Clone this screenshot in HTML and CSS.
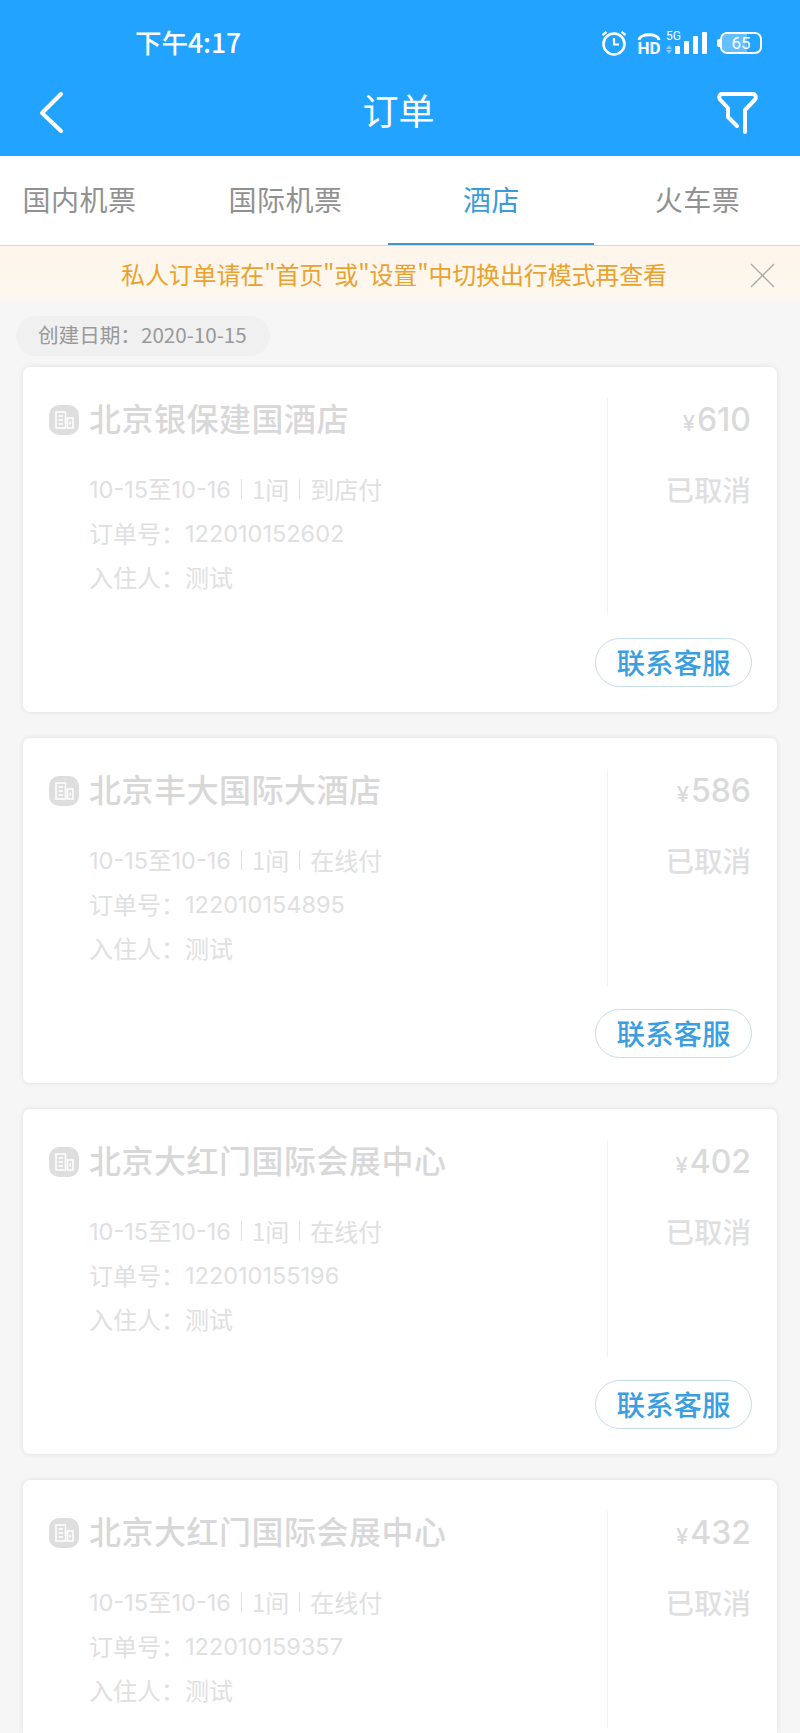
FILE: index.html
```html
<!DOCTYPE html>
<html lang="zh-CN">
<head>
    <meta charset="UTF-8">
    <meta name="viewport" content="width=device-width, initial-scale=1.0">
    <title>订单</title>
    <link rel="stylesheet" href="styles.css">
</head>
<body>
    <div class="header">
        <div class="status-bar">
            <span class="status-time">下午4:17</span>
            <div class="status-icons">
                <svg class="ic-alarm" width="28" height="28" viewBox="0 0 28 28" fill="none" stroke="#fff">
                    <circle cx="14" cy="15" r="10.500" stroke-width="2.600"/>
                    <path d="M14 9v6.500h5" stroke-width="2.200"/>
                    <path d="M2.500 6l4-3M25.500 6l-4-3" stroke-width="2.200"/>
                </svg>
                <div class="hd">
                    <svg width="24" height="9" viewBox="0 0 24 9" fill="none" stroke="#fff" stroke-width="3">
                        <path d="M2 8c1-7 19-7 20 0"/>
                    </svg>
                    <span class="hd-text">HD</span>
                </div>
                <div class="signal">
                    <span class="net-text">5G</span>
                    <svg width="42" height="22" viewBox="0 0 42 22" fill="#fff">
                        <path d="M0 17l3-4 3 4zM0 18l3 4 3-4z" opacity=".45"/>
                        <rect x="9" y="14" width="5" height="8" rx="1"/>
                        <rect x="18" y="9" width="5" height="13" rx="1"/>
                        <rect x="27" y="4" width="5" height="18" rx="1"/>
                        <rect x="36" y="0" width="5" height="22" rx="1"/>
                    </svg>
                </div>
                <div class="battery">
                    <span class="battery-fill"></span>
                    <span class="battery-num">65</span>
                </div>
            </div>
        </div>
        <div class="nav-bar">
            <svg class="nav-back" width="30" height="46" viewBox="0 0 30 46" fill="none" stroke="#fff" stroke-width="4" stroke-linecap="round" stroke-linejoin="round">
                <path d="M25 4L6 23l19 18"/>
            </svg>
            <span class="nav-title">订单</span>
            <svg class="nav-filter" width="42" height="44" viewBox="0 0 42 44" fill="none" stroke="#fff" stroke-width="4" stroke-linecap="round" stroke-linejoin="round">
                <path d="M20 35l-9-9v-9L3 8.500C1.500 6.500 2.500 3 5 3h31c2.500 0 3.500 3.500 2 5.500L28 19v22"/>
            </svg>
        </div>
    </div>

    <div class="tabs">
        <div class="tab">国内机票</div>
        <div class="tab">国际机票</div>
        <div class="tab active">酒店</div>
        <div class="tab">火车票</div>
    </div>

    <div class="notice">
        <span class="notice-text">私人订单请在"首页"或"设置"中切换出行模式再查看</span>
        <svg class="notice-close" width="25" height="25" viewBox="0 0 25 25" fill="none" stroke="#a8a8a8" stroke-width="1.300">
            <path d="M1 1l23 23M24 1L1 24"/>
        </svg>
    </div>

    <div class="date-pill">创建日期：2020-10-15</div>

    <div class="order-list">
        <div class="card">
            <div class="card-body">
                <div class="card-main">
                    <div class="hotel-row">
                        <svg class="hotel-icon" width="30" height="30" viewBox="0 0 30 30">
                            <rect width="30" height="30" rx="10" fill="#dedede"/>
                            <path d="M7 7h9.500v16H7zM9.500 11h4.500M9.500 15h4.500M9.500 19h4.500M18.500 13H24v10h-5.500zM21.200 16.500v3" fill="none" stroke="#fff" stroke-width="1.500"/>
                        </svg>
                        <span class="hotel-name">北京银保建国酒店</span>
                    </div>
                    <div class="detail"><span class="num">10-15至10-16</span><i class="sep"></i>1间<i class="sep"></i>到店付</div>
                    <div class="detail">订单号：<span class="num">122010152602</span></div>
                    <div class="detail">入住人：测试</div>
                </div>
                <div class="card-side">
                    <div class="price"><small>¥</small>610</div>
                    <div class="state">已取消</div>
                </div>
            </div>
            <div class="card-foot"><span class="btn-service">联系客服</span></div>
        </div>

        <div class="card">
            <div class="card-body">
                <div class="card-main">
                    <div class="hotel-row">
                        <svg class="hotel-icon" width="30" height="30" viewBox="0 0 30 30">
                            <rect width="30" height="30" rx="10" fill="#dedede"/>
                            <path d="M7 7h9.500v16H7zM9.500 11h4.500M9.500 15h4.500M9.500 19h4.500M18.500 13H24v10h-5.500zM21.200 16.500v3" fill="none" stroke="#fff" stroke-width="1.500"/>
                        </svg>
                        <span class="hotel-name">北京丰大国际大酒店</span>
                    </div>
                    <div class="detail"><span class="num">10-15至10-16</span><i class="sep"></i>1间<i class="sep"></i>在线付</div>
                    <div class="detail">订单号：<span class="num">122010154895</span></div>
                    <div class="detail">入住人：测试</div>
                </div>
                <div class="card-side">
                    <div class="price"><small>¥</small>586</div>
                    <div class="state">已取消</div>
                </div>
            </div>
            <div class="card-foot"><span class="btn-service">联系客服</span></div>
        </div>

        <div class="card">
            <div class="card-body">
                <div class="card-main">
                    <div class="hotel-row">
                        <svg class="hotel-icon" width="30" height="30" viewBox="0 0 30 30">
                            <rect width="30" height="30" rx="10" fill="#dedede"/>
                            <path d="M7 7h9.500v16H7zM9.500 11h4.500M9.500 15h4.500M9.500 19h4.500M18.500 13H24v10h-5.500zM21.200 16.500v3" fill="none" stroke="#fff" stroke-width="1.500"/>
                        </svg>
                        <span class="hotel-name">北京大红门国际会展中心</span>
                    </div>
                    <div class="detail"><span class="num">10-15至10-16</span><i class="sep"></i>1间<i class="sep"></i>在线付</div>
                    <div class="detail">订单号：<span class="num">122010155196</span></div>
                    <div class="detail">入住人：测试</div>
                </div>
                <div class="card-side">
                    <div class="price"><small>¥</small>402</div>
                    <div class="state">已取消</div>
                </div>
            </div>
            <div class="card-foot"><span class="btn-service">联系客服</span></div>
        </div>

        <div class="card card-cut">
            <div class="card-body">
                <div class="card-main">
                    <div class="hotel-row">
                        <svg class="hotel-icon" width="30" height="30" viewBox="0 0 30 30">
                            <rect width="30" height="30" rx="10" fill="#dedede"/>
                            <path d="M7 7h9.500v16H7zM9.500 11h4.500M9.500 15h4.500M9.500 19h4.500M18.500 13H24v10h-5.500zM21.200 16.500v3" fill="none" stroke="#fff" stroke-width="1.500"/>
                        </svg>
                        <span class="hotel-name">北京大红门国际会展中心</span>
                    </div>
                    <div class="detail"><span class="num">10-15至10-16</span><i class="sep"></i>1间<i class="sep"></i>在线付</div>
                    <div class="detail">订单号：<span class="num">122010159357</span></div>
                    <div class="detail">入住人：测试</div>
                </div>
                <div class="card-side">
                    <div class="price"><small>¥</small>432</div>
                    <div class="state">已取消</div>
                </div>
            </div>
        </div>
    </div>
</body>
</html>
```

FILE: styles.css
```css
html, body {
    height: 1733px;
    overflow: hidden;
}
body {
    margin: 0;
    font-family: "Noto Sans CJK SC", "Noto Sans", sans-serif;
    background-color: #f6f6f6;
}
.header {
    height: 156px;
    background-color: #21a3ff;
    color: #fff;
    box-sizing: border-box;
}
.status-bar {
    height: 78px;
    padding: 8px 38px 0 135px;
    box-sizing: border-box;
    display: flex;
    justify-content: space-between;
    align-items: center;
}
.status-time {
    margin-top: -4px;
    font-size: 26.500px;
    font-weight: 500;
}
.status-icons {
    display: flex;
    align-items: center;
}
.hd {
    width: 26px;
    margin-left: 8px;
    display: flex;
    flex-direction: column;
    align-items: center;
}
.hd-text {
    font-family: "Roboto", sans-serif;
    font-weight: 700;
    font-size: 17px;
    line-height: 14px;
}
.signal {
    position: relative;
    width: 42px;
    height: 22px;
    margin-left: 4px;
}
.net-text {
    position: absolute;
    left: 0;
    top: -2px;
    font-family: "Roboto", sans-serif;
    font-size: 12px;
    line-height: 12px;
}
.battery {
    position: relative;
    width: 42px;
    height: 22px;
    margin-left: 12px;
    box-sizing: border-box;
    border: 2px solid #fff;
    border-radius: 7px;
    display: flex;
    align-items: center;
    justify-content: center;
}
.battery::before {
    content: "";
    position: absolute;
    left: -5px;
    top: 5px;
    width: 3px;
    height: 8px;
    border-radius: 2px 0 0 2px;
    background-color: #fff;
}
.battery-fill {
    position: absolute;
    left: 0;
    top: 0;
    bottom: 0;
    width: 65%;
    border-radius: 5px 0 0 5px;
    background-color: rgba(255, 255, 255, 0.3);
}
.battery-num {
    position: relative;
    font-family: "Roboto", sans-serif;
    font-size: 17px;
    line-height: 18px;
}
.nav-bar {
    height: 78px;
    padding: 0 41px 8px 36px;
    box-sizing: border-box;
    display: flex;
    align-items: center;
    justify-content: space-between;
}
.nav-title {
    font-size: 36px;
    line-height: 44px;
    margin-left: 14px;
    margin-bottom: 9px;
}
.tabs {
    height: 90px;
    display: grid;
    grid-template-columns: repeat(4, 206px);
    justify-content: end;
    background-color: #fff;
    border-bottom: 1px solid #d8d8d8;
    box-sizing: border-box;
    overflow: hidden;
}
.tab {
    padding-left: 1px;
    font-size: 28px;
    letter-spacing: 0.5px;
    line-height: 86px;
    text-align: center;
    color: #919191;
}
.tab.active {
    color: #3a9bdc;
    border-bottom: 2px solid #3f95cf;
    height: 89px;
    box-sizing: border-box;
}
.notice {
    height: 60px;
    position: relative;
    display: flex;
    align-items: center;
    justify-content: center;
    background: linear-gradient(#fef5ea, #fdf7ef 80%, #f7f6f4);
    padding-right: 12px;
    padding-bottom: 6px;
    box-sizing: border-box;
}
.notice-text {
    font-size: 24px;
    letter-spacing: -0.15px;
    color: #e9a22e;
}
.notice-close {
    position: absolute;
    right: 25px;
    top: 17px;
}
.date-pill {
    width: 254px;
    height: 40px;
    margin: 10px 0 11px 16px;
    padding-left: 22px;
    box-sizing: border-box;
    border-radius: 20px;
    background-color: #f0f0f0;
    color: #999;
    font-size: 20.600px;
    line-height: 36px;
    white-space: nowrap;
}
.order-list {
    padding: 0 23px;
    display: flex;
    flex-direction: column;
    gap: 26px;
}
.card {
    height: 345px;
    padding: 31px 26px 25px;
    box-sizing: border-box;
    background-color: #fff;
    border-radius: 7px;
    box-shadow: 0 0 5px rgba(0, 0, 0, 0.1);
    flex-shrink: 0;
}
.card-cut {
    height: 253px;
    padding-bottom: 0;
    border-radius: 7px 7px 0 0;
}
.card-body {
    height: 217px;
    display: flex;
}
.card-main {
    flex: 1;
}
.hotel-row {
    display: flex;
    align-items: center;
    gap: 10px;
    height: 44px;
    margin-bottom: 25px;
}
.hotel-name {
    margin-top: -6px;
    font-size: 32px;
    letter-spacing: 0.5px;
    font-weight: 500;
    color: #d8d8d8;
}
.detail {
    height: 44px;
    padding-left: 40px;
    font-size: 24px;
    line-height: 44px;
    color: #e0e0e0;
    display: flex;
    align-items: center;
}
.num {
    font-family: "Inter", "Noto Sans CJK SC", sans-serif;
    font-size: 23.500px;
    line-height: 38px;
    margin-top: 2px;
}
.sep {
    width: 1px;
    height: 20px;
    margin: 0 10px;
    background-color: #e0e0e0;
}
.card-side {
    width: 143px;
    border-left: 1px solid #f2f2f2;
    text-align: right;
}
.price {
    height: 44px;
    margin-bottom: 25px;
    font-family: "Inter", "Noto Sans CJK SC", sans-serif;
    font-size: 32px;
    line-height: 44px;
    font-weight: 500;
    color: #dadada;
}
.price small {
    font-size: 22px;
    margin-right: 2px;
}
.state {
    font-size: 28.500px;
    line-height: 44px;
    font-weight: 500;
    color: #dfdfdf;
}
.card-foot {
    margin-top: 23px;
    display: flex;
    justify-content: flex-end;
    margin-right: -1px;
}
.btn-service {
    width: 157px;
    height: 49px;
    box-sizing: border-box;
    border: 1px solid #c3dcec;
    border-radius: 25px;
    font-size: 28.500px;
    line-height: 46px;
    font-weight: 500;
    text-align: center;
    color: #3a9ee0;
}
```
